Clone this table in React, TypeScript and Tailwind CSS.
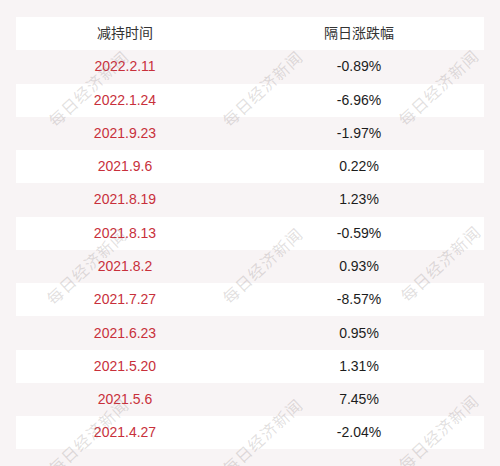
import React from "react";

const rows: [string, string][] = [
  ["2022.2.11", "-0.89%"],
  ["2022.1.24", "-6.96%"],
  ["2021.9.23", "-1.97%"],
  ["2021.9.6", "0.22%"],
  ["2021.8.19", "1.23%"],
  ["2021.8.13", "-0.59%"],
  ["2021.8.2", "0.93%"],
  ["2021.7.27", "-8.57%"],
  ["2021.6.23", "0.95%"],
  ["2021.5.20", "1.31%"],
  ["2021.5.6", "7.45%"],
  ["2021.4.27", "-2.04%"],
];

const marks: [number, number][] = [
  [88, 88],
  [262, 88],
  [438, 87],
  [86, 266],
  [262, 265],
  [440, 263],
  [88, 436],
  [262, 436],
  [438, 432],
];

export default function App() {
  return (
    <div
      className="relative w-[500px] h-[466px] overflow-hidden bg-[#f8f4f5] pt-[17px] px-[16px]"
      style={{ fontFamily: '"Liberation Sans", Arial, "Noto Sans CJK SC", sans-serif' }}
    >
      <div className="flex flex-col w-[468px]">
        <div className="flex h-[33.27px] items-center bg-white text-[14px] text-[#333333]">
          <div className="flex-1 text-center pr-[16px]">减持时间</div>
          <div className="flex-1 text-center pr-[16px]">隔日涨跌幅</div>
        </div>
        {rows.map(([d, p], i) => (
          <div
            key={d}
            className={`flex h-[33.27px] items-center text-[14px] ${i % 2 === 0 ? "bg-[#f8f4f5]" : "bg-white"}`}
          >
            <div className="flex-1 text-center pr-[16px] text-[#c8303b]">{d}</div>
            <div className="flex-1 text-center pr-[16px] text-[#1c1c1c]">{p}</div>
          </div>
        ))}
      </div>
      {marks.map(([x, y], i) => (
        <div
          key={i}
          className="pointer-events-none absolute whitespace-nowrap text-[16px] tracking-[1px] text-[#8a7f80]/25 leading-none"
          style={{
            left: x,
            top: y,
            transform: "translate(-50%, -50%) rotate(-43deg)",
            fontFamily: '"Noto Sans CJK SC", sans-serif',
          }}
        >
          每日经济新闻
        </div>
      ))}
    </div>
  );
}
